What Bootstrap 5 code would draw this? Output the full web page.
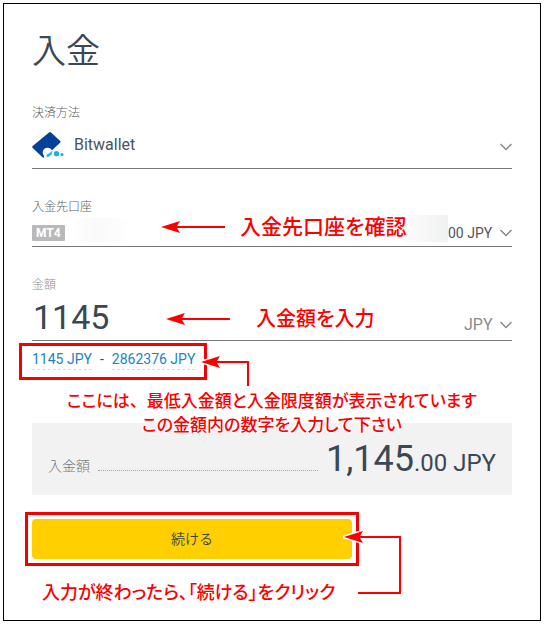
<!DOCTYPE html>
<html lang="ja">
<head>
<meta charset="utf-8">
<meta name="viewport" content="width=device-width, initial-scale=1">
<title>入金</title>
<link href="https://cdn.jsdelivr.net/npm/bootstrap@5.3.0/dist/css/bootstrap.min.css" rel="stylesheet">
<style>
  body { font-family: Roboto, "Noto Sans CJK JP", sans-serif; font-size: 14px; color: #3a4854; background: #fff; padding: 3px 4px 4px 3px; }
  .panel { border: 1px solid #000; padding: 28px 28px 17px; }
  .title { font-size: 34px; line-height: 38px; font-weight: 350; margin-bottom: 34px; }
  .field { position: relative; }
  .field-gap { margin-top: 29px; }
  .field-label { display: block; font-size: 12px; line-height: 18px; font-weight: 300; color: #5c5c5c; }
  .field-label.dim { color: #8c8c8c; }
  .control { display: flex; align-items: center; position: relative; border-bottom: 1px solid #777; }
  .control.tall { height: 47px; }
  .control.short { height: 31px; padding-top: 4px; }
  .control.amount { height: 47px; }
  .picker { appearance: none; border: 0; background: transparent; padding: 0; color: inherit; line-height: 24px; }
  .method { font-size: 16px; color: #4a545c; margin-left: 10px; }
  .account { width: 64px; color: #555; }
  .currency { width: 48px; font-size: 16px; color: #8a8a8a; }
  .chev { position: absolute; right: 0; pointer-events: none; }
  .tag { background: #b9b9b9; color: #fff; font-size: 12px; line-height: 16px; font-weight: 700; padding: 0 4px; border-radius: 1px; }
  .veil-start { width: 62px; height: 24px; margin: -6px 0 0 6px; background: linear-gradient(90deg, #fff, #f9f9f9 40%, #fff); }
  .veil-end { width: 44px; height: 27px; margin-top: -10px; background: linear-gradient(90deg, #fcfcfc, #f0f1f1); }
  .figure-input { border: 0; padding: 0 0 0 1px; font-size: 34px; line-height: 44px; color: #3a4854; width: 120px; background: transparent; }
  .boxed { border: 3px solid #f40000; }
  .range { width: fit-content; margin: 2px 0 0 -13px; padding: 4px 9px 7px 10px; line-height: 18px; }
  .range a { color: #1a83c6; text-decoration: none; border-bottom: 1px dashed #d0dbe2; padding-bottom: 1px; }
  .note { color: #fa0000; font-family: "Noto Sans CJK JP", sans-serif; font-weight: 500; font-feature-settings: "palt"; font-size: 20px; line-height: 24px; white-space: nowrap; margin: 0; }
  .full { font-feature-settings: normal; }
  .over { position: absolute; z-index: 2; }
  .halo { text-shadow: 0 0 2px #fff, 1px 1px 1px #fff, -1px -1px 1px #fff, 1px -1px 1px #fff, -1px 1px 1px #fff; }
  .note-account { left: 208px; top: 15px; font-size: 21px; }
  .note-amount { left: 224px; top: 30px; }
  .note-range { left: 35px; top: 45px; font-size: 17px; text-align: center; }
  .arrow-account { left: 128px; top: 20px; }
  .arrow-amount { left: 133px; top: 34px; }
  .arrow-range { left: 168px; top: 10px; }
  .arrow-submit { left: 311px; top: 15px; }
  .summary { background: #f2f2f2; height: 72px; margin-top: 43px; padding: 0 16px; display: flex; align-items: baseline; line-height: 72px; }
  .summary-label { color: #777; font-weight: 300; }
  .leader { flex: 1; border-bottom: 1px dotted #a5a5a5; margin: 0 8px; }
  .sum-large { font-size: 36px; }
  .sum-small { font-size: 24px; }
  .submit-box { width: calc(66.6667% + 14px); margin: 17px 0 0 -7px; padding: 4px; }
  .submit { height: 40px; background: #ffcf00; color: #34434f; border: 0; border-radius: 4px; font-size: 14px; font-weight: 350; }
  .note-submit { margin: 13px 0 0 10px; font-size: 18px; }
</style>
<script src="https://cdn.jsdelivr.net/npm/bootstrap@5.3.0/dist/js/bootstrap.bundle.min.js"></script>
</head>
<body>
<main class="panel">
  <h1 class="title">入金</h1>
  <form>
    <div class="field">
      <label class="field-label" for="method">決済方法</label>
      <div class="control tall">
        <svg width="32" height="28" viewBox="0 0 32 28" aria-hidden="true">
          <path d="M17 1.400q1-.7 2 .1l9 8.300q1 1 .1 2L12.500 26.300q-1 .9-2 0L.7 17q-1-1 0-2Z" fill="#07409a"/>
          <circle cx="15.500" cy="21.500" r="4.800" fill="#fff"/><path d="M12 24l8-5 3 8H12Z" fill="#fff"/>
          <path d="M19.800 20.500Q19.500 25 15 25.600L15.400 23.500Q18.500 23 19.800 20.500Z" fill="#14b2ea" stroke="#14b2ea"/>
          <circle cx="24.500" cy="22.700" r="2.600" fill="#14b2ea"/><circle cx="30" cy="23.600" r="1.500" fill="#14b2ea"/>
        </svg>
        <select class="picker method flex-grow-1" id="method"><option>Bitwallet</option></select>
        <svg class="chev mt-1" width="12" height="8" viewBox="0 0 12 8" fill="none" stroke="#888" stroke-width="1.500" aria-hidden="true"><path d="M.5 1 6 6.500 11.500 1"/></svg>
      </div>
    </div>

    <div class="field field-gap">
      <label class="field-label" for="account">入金先口座</label>
      <div class="control short">
        <span class="tag">MT4</span>
        <span class="veil-start"></span>
        <span class="veil-end ms-auto"></span>
        <select class="picker account" id="account"><option>00 JPY</option></select>
        <svg class="chev" width="12" height="8" viewBox="0 0 12 8" fill="none" stroke="#888" stroke-width="1.500" aria-hidden="true"><path d="M.5 1 6 6.500 11.500 1"/></svg>
      </div>
      <svg class="over arrow-account" width="66" height="18" viewBox="0 0 66 18" fill="#fa0000" aria-hidden="true"><path d="M1 9 20 3 17 8H65v2H17l3 5Z"/></svg>
      <p class="note over note-account">入金先口座を確認</p>
    </div>

    <div class="field field-gap">
      <label class="field-label dim" for="amount">金額</label>
      <div class="control amount">
        <input class="figure-input" id="amount" type="text" inputmode="numeric" value="1145">
        <select class="picker currency ms-auto mt-3" aria-label="通貨"><option>JPY</option></select>
        <svg class="chev mt-3" width="12" height="8" viewBox="0 0 12 8" fill="none" stroke="#888" stroke-width="1.500" aria-hidden="true"><path d="M.5 1 6 6.500 11.500 1"/></svg>
      </div>
      <svg class="over arrow-amount" width="66" height="18" viewBox="0 0 66 18" fill="#fa0000" aria-hidden="true"><path d="M1 9 20 3 17 8H65v2H17l3 5Z"/></svg>
      <p class="note over note-amount">入金額を入力</p>
    </div>

    <div class="field">
      <div class="boxed range d-flex gap-2"><a href="#amount">1145 JPY</a><span>-</span><a href="#amount">2862376 JPY</a></div>
      <svg class="over arrow-range" width="50" height="34" viewBox="0 0 50 34" aria-hidden="true"><path d="M1 9 20 3 17 8H49V33H47V10H17l3 5Z" fill="#fa0000" stroke="#fff" stroke-width="3" paint-order="stroke"/></svg>
      <p class="note over halo note-range">ここには<span class="full">、</span>最低入金額と入金限度額が表示されています<br>この金額内の数字を入力して下さい</p>
    </div>

    <div class="summary">
      <span class="summary-label">入金額</span><span class="leader"></span>
      <span class="sum-large">1,145</span><span class="sum-small">.00 JPY</span>
    </div>

    <div class="field">
      <div class="boxed submit-box"><button class="submit d-block w-100" type="button">続ける</button></div>
      <svg class="over arrow-submit" width="60" height="70" viewBox="0 0 60 70" aria-hidden="true"><path d="M1 10 20 4 17 9H58V67H15V65H56V11H17l3 5Z" fill="#fa0000" stroke="#fff" stroke-width="3" paint-order="stroke"/></svg>
      <p class="note note-submit">入力が終わったら、「続ける」をクリック</p>
    </div>
  </form>
</main>
</body>
</html>
